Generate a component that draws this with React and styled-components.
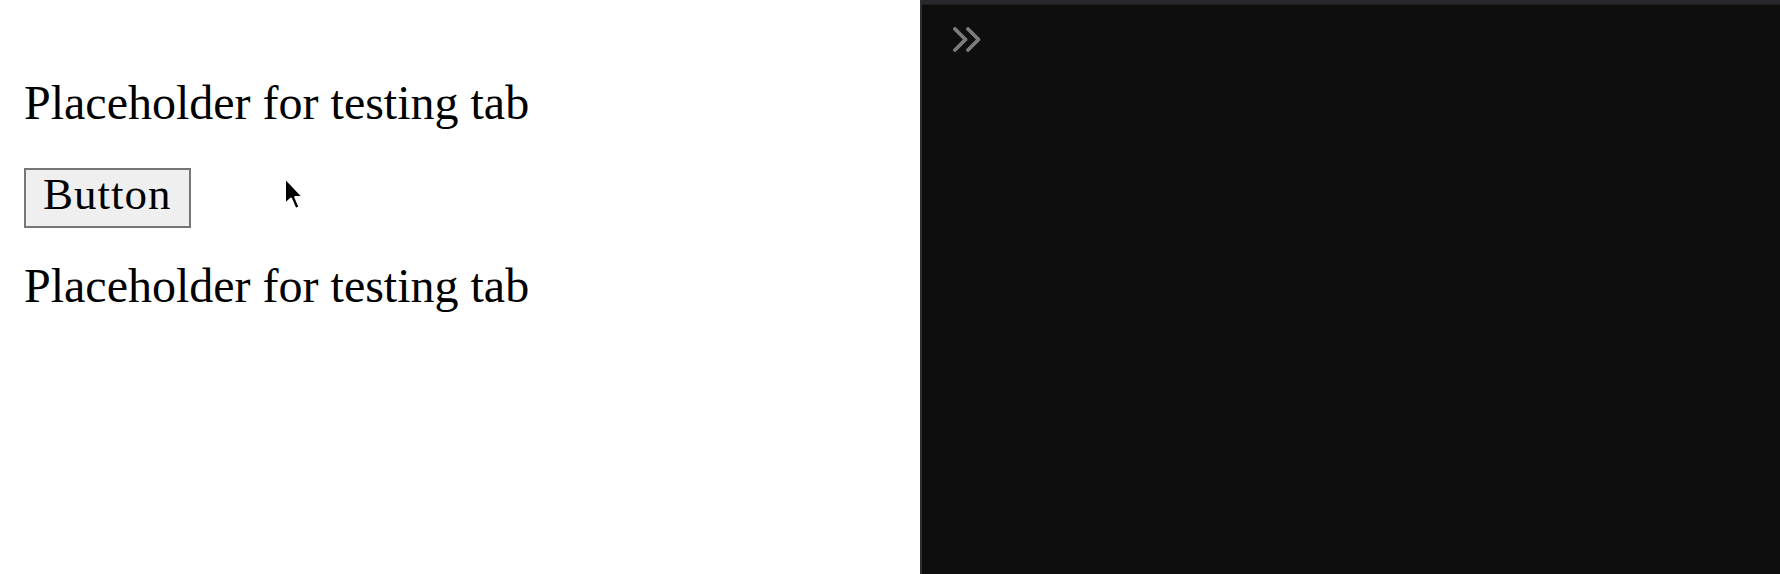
import React from "react";
import styled, { createGlobalStyle } from "styled-components";

const Global = createGlobalStyle`
  html, body { margin: 0; padding: 0; background: #ffffff; }
  body { font-family: "Liberation Serif", "Times New Roman", serif; }
  #root { height: 574px; }
`;

const Layout = styled.div`
  display: flex;
  width: 1780px;
  height: 574px;
  overflow: hidden;
`;

const Preview = styled.section`
  position: relative;
  width: 920px;
  flex: none;
  box-sizing: border-box;
  padding: 75px 0 0 24px;
  display: flex;
  flex-direction: column;
  align-items: flex-start;
  background: #ffffff;
  color: #000000;
`;

const Paragraph = styled.p`
  margin: 0 0 ${(p) => p.$after || 0}px 0;
  font-size: 48px;
  line-height: 56px;
  white-space: nowrap;
`;

const PlainButton = styled.button`
  box-sizing: border-box;
  width: 167px;
  height: 60px;
  margin: 0 0 ${(p) => p.$after || 0}px 0;
  padding: 4px 0 0 17px;
  border: 2px solid #767676;
  border-radius: 0;
  background: #efefef;
  color: #000000;
  font-family: "Liberation Serif", "Times New Roman", serif;
  font-size: 45px;
  line-height: 40px;
  letter-spacing: 1px;
  text-align: left;
  display: flex;
  align-items: flex-start;
`;

const Cursor = styled.svg`
  position: absolute;
  left: 283px;
  top: 176px;
  width: 22px;
  height: 36px;
  pointer-events: none;
`;

const Console = styled.section`
  flex: 1;
  display: flex;
  flex-direction: column;
  background: #0e0e0e;
  border-left: 2px solid #2e2e35;
`;

const TopStrip = styled.div`
  height: 4px;
  background: #27272c;
  border-bottom: 1px solid #1c1c20;
`;

const PromptRow = styled.div`
  display: flex;
  padding: 22px 0 0 31px;
`;

const Chevrons = styled.svg`
  width: 30px;
  height: 28px;
  display: block;
`;

export default function App() {
  return (
    <>
      <Global />
      <Layout>
        <Preview>
          <Paragraph $after={37}>Placeholder for testing tab</Paragraph>
          <PlainButton $after={30}>Button</PlainButton>
          <Paragraph>Placeholder for testing tab</Paragraph>
          <Cursor viewBox="0 0 22 36">
            <path
              d="M2 2 L2 28 L8 22.5 L12.5 33 L16.5 31.2 L12.2 21 L20 21 Z"
              fill="#000"
              stroke="#fff"
              strokeWidth="2"
              strokeLinejoin="round"
            />
          </Cursor>
        </Preview>
        <Console>
          <TopStrip />
          <PromptRow>
            <Chevrons viewBox="0 0 30 28">
              <path
                d="M2 2 L12.5 12.5 L2 23 M15 2 L25.5 12.5 L15 23"
                fill="none"
                stroke="#7c7c7c"
                strokeWidth="3.8"
                strokeLinecap="round"
                strokeLinejoin="round"
              />
            </Chevrons>
          </PromptRow>
        </Console>
      </Layout>
    </>
  );
}
